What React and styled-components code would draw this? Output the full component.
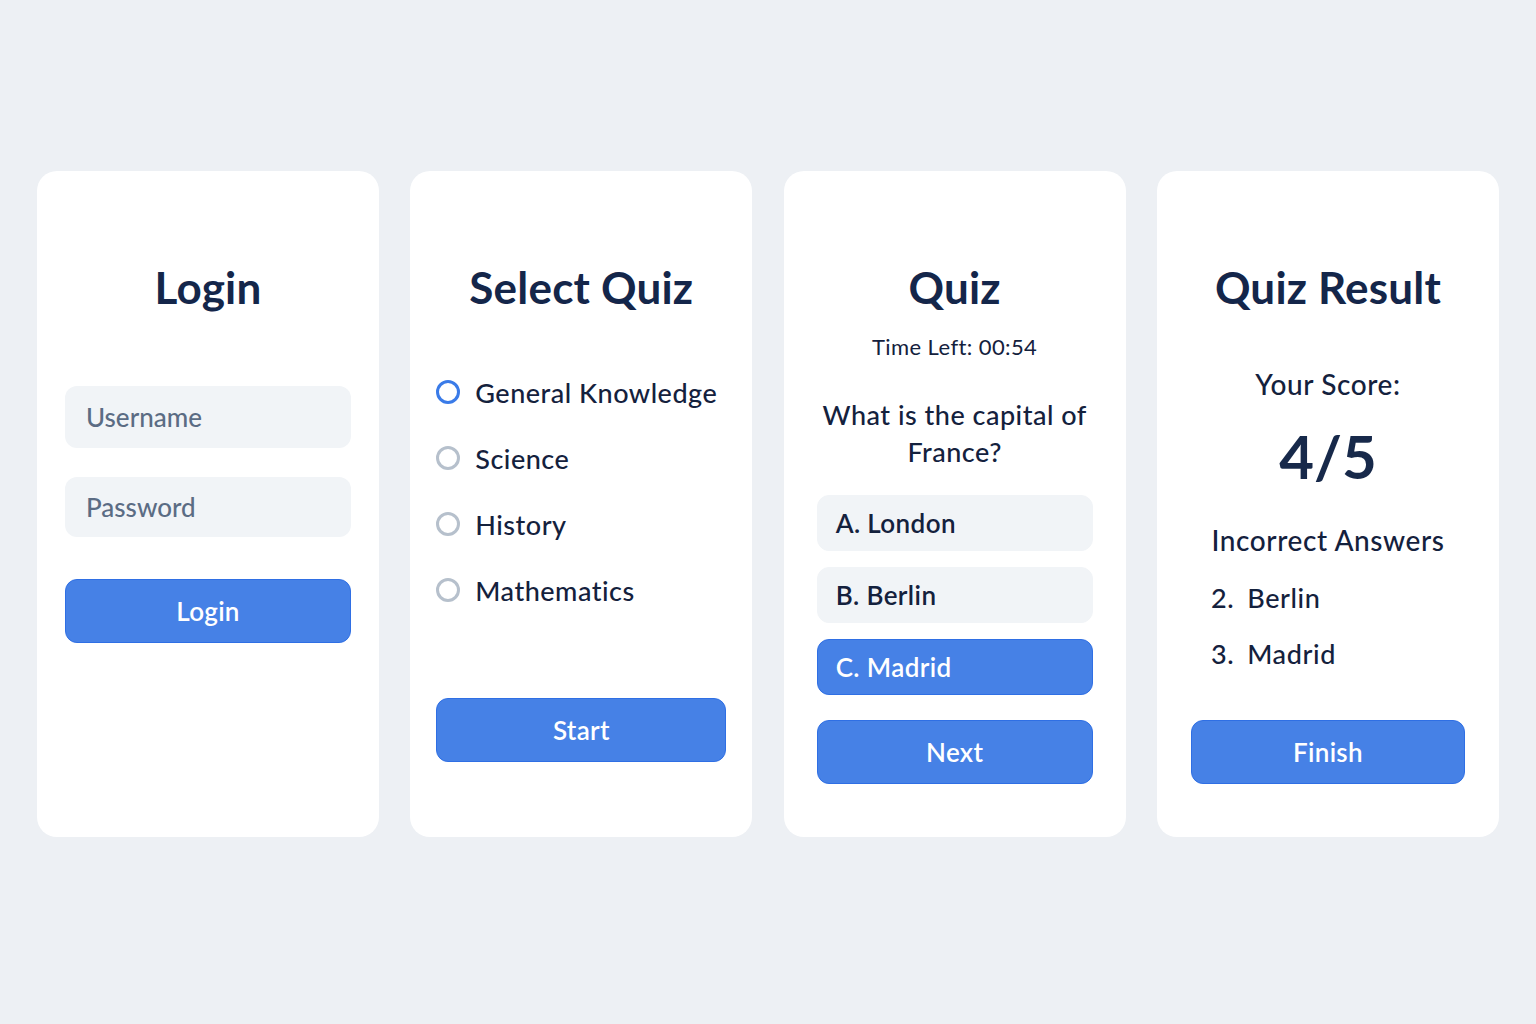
import React from "react";
import styled, { createGlobalStyle } from "styled-components";

const GlobalStyle = createGlobalStyle`
  body {
    margin: 0;
    background: #edf0f4;
    font-family: "Lato", "Noto Sans", sans-serif;
    color: #14233f;
  }
`;

const Page = styled.div`
  min-height: 1024px;
  display: flex;
  justify-content: flex-start;
  align-items: flex-start;
  gap: 31.33px;
  padding: 171px 0 0 37px;
  box-sizing: border-box;
`;

const Card = styled.section`
  width: 342px;
  height: 666px;
  box-sizing: border-box;
  background: #ffffff;
  border-radius: 20px;
  padding: 90px ${(p) => p.$pad || 28}px 0;
  display: flex;
  flex-direction: column;
`;

const Title = styled.h1`
  margin: 0;
  font-size: 44px;
  line-height: 52px;
  font-weight: 700;
  text-align: center;
  color: #14264a;
  letter-spacing: 0.2px;
`;

const Input = styled.div`
  height: ${(p) => p.$h || 60}px;
  margin-top: ${(p) => p.$mt}px;
  background: #f1f4f7;
  border-radius: 12px;
  display: flex;
  align-items: center;
  padding-left: 21px;
  font-size: 26px;
  font-weight: 500;
  color: #5b6c84;
`;

const Button = styled.button`
  height: 64px;
  width: 100%;
  margin-top: ${(p) => p.$mt}px;
  background: #4681e6;
  border: 1.5px solid #2f6fe4;
  border-radius: 12px;
  color: #ffffff;
  font-family: inherit;
  font-size: 26px;
  font-weight: 600;
  letter-spacing: 0.3px;
  cursor: pointer;
`;

const RadioList = styled.div`
  margin-top: 59px;
  display: flex;
  flex-direction: column;
  gap: 26px;
`;

const RadioRow = styled.label`
  height: 40px;
  display: flex;
  align-items: center;
  gap: 15px;
  font-size: 27px;
  font-weight: 500;
  letter-spacing: 0.5px;
  color: #14213d;
`;

const Circle = styled.span`
  width: 24px;
  height: 24px;
  box-sizing: border-box;
  border-radius: 50%;
  border: 3px solid ${(p) => (p.$on ? "#3a7be8" : "#b6c0cc")};
  flex-shrink: 0;
`;

const Timer = styled.div`
  margin-top: 21px;
  font-size: 22px;
  line-height: 26px;
  letter-spacing: 0.4px;
  text-align: center;
  color: #14213d;
`;

const Question = styled.div`
  margin-top: 36px;
  font-size: 27px;
  line-height: 37px;
  font-weight: 500;
  letter-spacing: 0.5px;
  text-align: center;
  color: #14213d;
`;

const Options = styled.div`
  margin-top: 25px;
  display: flex;
  flex-direction: column;
  gap: 16px;
`;

const Option = styled.div`
  height: 56px;
  box-sizing: border-box;
  border-radius: 12px;
  display: flex;
  align-items: center;
  padding-left: 18px;
  font-size: 26px;
  font-weight: 600;
  letter-spacing: 0.4px;
  background: ${(p) => (p.$on ? "#4681e6" : "#f1f4f7")};
  color: ${(p) => (p.$on ? "#ffffff" : "#14213d")};
  border: 1.5px solid ${(p) => (p.$on ? "#2f6fe4" : "#f1f4f7")};
`;

const Label = styled.div`
  margin-top: ${(p) => p.$mt}px;
  font-size: 28px;
  line-height: 34px;
  font-weight: 500;
  letter-spacing: 0.6px;
  text-align: center;
  color: #14213d;
`;

const Score = styled.div`
  margin-top: 20px;
  font-size: 60px;
  line-height: 70px;
  font-weight: 700;
  text-align: center;
  color: #17294a;
`;

const Wrong = styled.ol`
  margin: 24px 0 0;
  padding: 0 0 0 20px;
  list-style: none;
  display: flex;
  flex-direction: column;
  gap: 22px;
`;

const WrongItem = styled.li`
  display: flex;
  gap: 13px;
  font-size: 27px;
  line-height: 34px;
  font-weight: 500;
  letter-spacing: 0.6px;
  color: #14213d;
`;

const quizzes = ["General Knowledge", "Science", "History", "Mathematics"];
const answers = [
  { id: "A", text: "London" },
  { id: "B", text: "Berlin" },
  { id: "C", text: "Madrid", on: true },
];

export default function App() {
  return (
    <>
      <GlobalStyle />
      <Page>
        <Card>
          <Title>Login</Title>
          <Input $mt={73} $h={62}>Username</Input>
          <Input $mt={29}>Password</Input>
          <Button $mt={42}>Login</Button>
        </Card>

        <Card $pad={26}>
          <Title>Select Quiz</Title>
          <RadioList>
            {quizzes.map((q, i) => (
              <RadioRow key={q}>
                <Circle $on={i === 0} />
                {q}
              </RadioRow>
            ))}
          </RadioList>
          <Button $mt={88}>Start</Button>
        </Card>

        <Card $pad={33}>
          <Title>Quiz</Title>
          <Timer>Time Left: 00:54</Timer>
          <Question>What is the capital of France?</Question>
          <Options>
            {answers.map((a) => (
              <Option key={a.id} $on={a.on}>
                {a.id}. {a.text}
              </Option>
            ))}
          </Options>
          <Button $mt={25}>Next</Button>
        </Card>

        <Card $pad={34}>
          <Title>Quiz Result</Title>
          <Label $mt={54}>Your Score:</Label>
          <Score>4/5</Score>
          <Label $mt={32}>Incorrect Answers</Label>
          <Wrong>
            <WrongItem>
              <span>2.</span>
              <span>Berlin</span>
            </WrongItem>
            <WrongItem>
              <span>3.</span>
              <span>Madrid</span>
            </WrongItem>
          </Wrong>
          <Button $mt={49}>Finish</Button>
        </Card>
      </Page>
    </>
  );
}
